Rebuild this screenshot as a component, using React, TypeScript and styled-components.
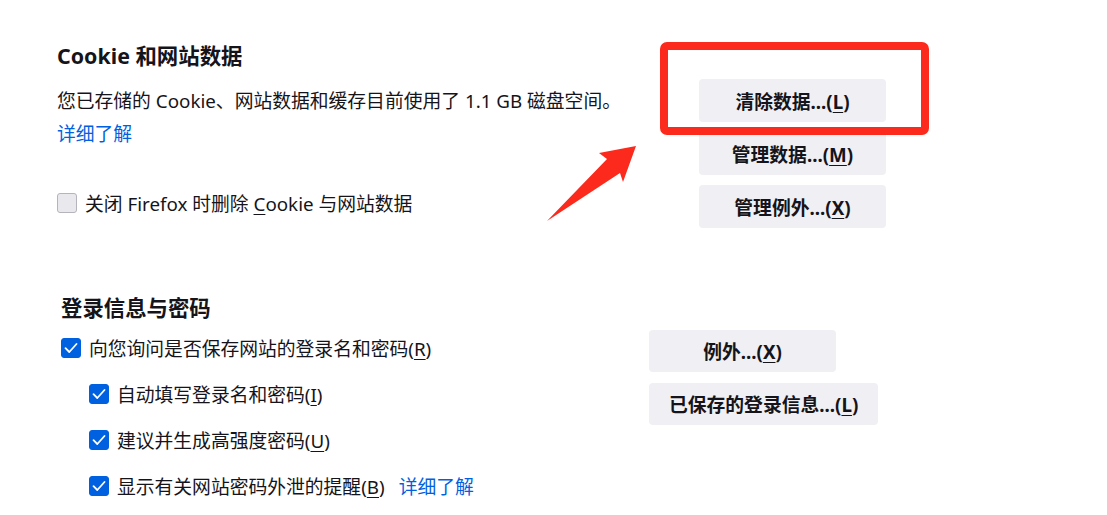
import React from 'react';
import styled, { createGlobalStyle } from 'styled-components';

const GlobalStyle = createGlobalStyle`
    body {
        margin: 0;
        background: #ffffff;
        color: #15141a;
        font-family: "Noto Sans", "Noto Sans CJK SC", sans-serif;
    }
`;

const Page = styled.div`
    position: relative;
    width: 1107px;
    height: 515px;
    overflow: hidden;
    background: #ffffff;
`;

const Section = styled.section<{ $left: number; $top: number }>`
    padding-left: ${(p) => p.$left}px;
    margin-top: ${(p) => p.$top}px;
`;

const Heading = styled.h2`
    margin: 0;
    font-size: 21.4px;
    line-height: 28px;
    font-weight: 700;
`;

const Body = styled.div<{ $gap: number }>`
    display: flex;
    margin-top: ${(p) => p.$gap}px;
`;

const LeftColumn = styled.div<{ $width: number; $pad: number }>`
    width: ${(p) => p.$width}px;
    padding-top: ${(p) => p.$pad}px;
    display: flex;
    flex-direction: column;
`;

const ButtonColumn = styled.div<{ $gap: number }>`
    display: flex;
    flex-direction: column;
    align-items: flex-start;
    gap: ${(p) => p.$gap}px;
`;

const Text = styled.div`
    font-size: 18.8px;
    line-height: 26px;
    white-space: nowrap;
`;

const Link = styled.a<{ $top?: number; $left?: number }>`
    display: inline-block;
    margin-top: ${(p) => p.$top ?? 0}px;
    margin-left: ${(p) => p.$left ?? 0}px;
    color: #0061e0;
    font-size: 18.8px;
    line-height: 26px;
    text-decoration: none;
    cursor: pointer;
`;

const CheckRow = styled.label<{ $indent?: number; $top?: number }>`
    display: flex;
    align-items: center;
    height: 26px;
    gap: 8px;
    margin-left: ${(p) => p.$indent ?? 0}px;
    margin-top: ${(p) => p.$top ?? 0}px;
    font-size: 18.8px;
    white-space: nowrap;
`;

const Box = styled.span<{ $checked?: boolean }>`
    width: 20px;
    height: 20px;
    box-sizing: border-box;
    border-radius: 3px;
    flex-shrink: 0;
    display: flex;
    align-items: center;
    justify-content: center;
    background: ${(p) => (p.$checked ? '#0061e0' : '#e9e9ed')};
    border: 1px solid ${(p) => (p.$checked ? '#0061e0' : '#b4b4bd')};
`;

const Key = styled.u`
    text-underline-offset: 3px;
    text-decoration-thickness: 1px;
`;

const Button = styled.button<{ $height: number }>`
    min-width: 187px;
    height: ${(p) => p.$height}px;
    padding: 0 20px;
    border: none;
    border-radius: 4px;
    background: #f0f0f4;
    color: #15141a;
    font-family: inherit;
    font-size: 18.8px;
    font-weight: 700;
    white-space: nowrap;
`;

const RedFrame = styled.div`
    position: absolute;
    left: 660px;
    top: 42px;
    width: 269px;
    height: 93px;
    box-sizing: border-box;
    border: 8px solid #fb2a1c;
    border-radius: 7px;
    pointer-events: none;
`;

const ArrowSvg = styled.svg`
    position: absolute;
    left: 540px;
    top: 140px;
    pointer-events: none;
`;

const Check = () => (
    <svg width="14" height="12" viewBox="0 0 14 12">
        <path d="M1.5 6.2 L5.3 10 L12.5 2" fill="none" stroke="#fff" strokeWidth="1.8" strokeLinecap="round" strokeLinejoin="round" />
    </svg>
);

const Checkbox = ({ checked, children, indent, top }: { checked?: boolean; children: React.ReactNode; indent?: number; top?: number }) => (
    <CheckRow $indent={indent} $top={top}>
        <Box $checked={checked}>{checked && <Check />}</Box>
        <span>{children}</span>
    </CheckRow>
);

const CookieSection = () => (
    <Section $left={57} $top={42}>
        <Heading>Cookie 和网站数据</Heading>
        <Body $gap={9}>
            <LeftColumn $width={642} $pad={9}>
                <Text>您已存储的 Cookie、网站数据和缓存目前使用了 1.1 GB 磁盘空间。</Text>
                <div>
                    <Link $top={7}>详细了解</Link>
                </div>
                <Checkbox top={43}>
                    关闭 Firefox 时删除 <Key>C</Key>ookie 与网站数据
                </Checkbox>
            </LeftColumn>
            <ButtonColumn $gap={10}>
                <Button $height={43}>清除数据...(<Key>L</Key>)</Button>
                <Button $height={43}>管理数据...(<Key>M</Key>)</Button>
                <Button $height={43}>管理例外...(<Key>X</Key>)</Button>
            </ButtonColumn>
        </Body>
    </Section>
);

const LoginSection = () => (
    <Section $left={61} $top={66}>
        <Heading>登录信息与密码</Heading>
        <Body $gap={8}>
            <LeftColumn $width={588} $pad={5}>
                <Checkbox checked>
                    向您询问是否保存网站的登录名和密码(<Key>R</Key>)
                </Checkbox>
                <Checkbox checked indent={28} top={20}>
                    自动填写登录名和密码(<Key>I</Key>)
                </Checkbox>
                <Checkbox checked indent={28} top={20}>
                    建议并生成高强度密码(<Key>U</Key>)
                </Checkbox>
                <Checkbox checked indent={28} top={20}>
                    显示有关网站密码外泄的提醒(<Key>B</Key>)
                    <Link $left={14}>详细了解</Link>
                </Checkbox>
            </LeftColumn>
            <ButtonColumn $gap={11}>
                <Button $height={42}>例外...(<Key>X</Key>)</Button>
                <Button $height={42}>已保存的登录信息...(<Key>L</Key>)</Button>
            </ButtonColumn>
        </Body>
    </Section>
);

const App = () => (
    <Page>
        <GlobalStyle />
        <CookieSection />
        <LoginSection />
        <RedFrame />
        <ArrowSvg width="105" height="90" viewBox="0 0 105 90">
            <polygon points="96,6 83,42 80,33 7,81 67,19 59,13" fill="#fb2a1c" />
        </ArrowSvg>
    </Page>
);

export default App;
